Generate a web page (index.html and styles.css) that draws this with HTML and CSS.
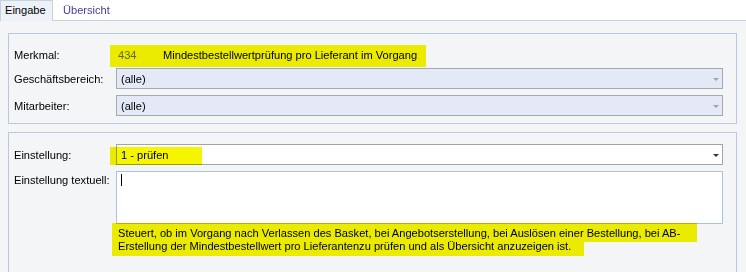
FILE: index.html
```html
<!DOCTYPE html>
<html lang="de">
<head>
<meta charset="utf-8">
<title>Eingabe</title>
<link rel="stylesheet" href="styles.css">
</head>
<body>
<div class="tabs">
  <div class="tab active">Eingabe</div>
  <div class="tab">Übersicht</div>
  <div class="tab-fill"></div>
</div>
<div class="panel">
  <div class="group g1">
    <div class="row merk">
      <span class="label">Merkmal:</span>
      <span class="value"><span class="num">434</span><span class="name">Mindestbestellwertprüfung pro Lieferant im Vorgang</span></span>
    </div>
    <div class="row">
      <span class="label">Geschäftsbereich:</span>
      <div class="combo disabled"><span class="ctext">(alle)</span><span class="arrow"></span></div>
    </div>
    <div class="row">
      <span class="label">Mitarbeiter:</span>
      <div class="combo disabled"><span class="ctext">(alle)</span><span class="arrow"></span></div>
    </div>
    <div class="hl hl-merk"></div>
  </div>
  <div class="group g2">
    <div class="row">
      <span class="label">Einstellung:</span>
      <div class="combo"><span class="ctext">1 - prüfen</span><span class="arrow"></span></div>
    </div>
    <div class="row top">
      <span class="label tlabel">Einstellung textuell:</span>
      <div class="field">
        <div class="textarea"><span class="caret"></span></div>
        <div class="desc">Steuert, ob im Vorgang nach Verlassen des Basket, bei Angebotserstellung, bei Auslösen einer Bestellung, bei AB-<br>Erstellung der Mindestbestellwert pro Lieferantenzu prüfen und als Übersicht anzuzeigen ist.</div>
      </div>
    </div>
    <div class="hl hl-set"></div>
    <div class="hl hl-desc1"></div>
    <div class="hl hl-desc2"></div>
  </div>
</div>
</body>
</html>
```

FILE: styles.css
```css
html, body {
  margin: 0;
  padding: 0;
}
body {
  width: 746px;
  height: 272px;
  overflow: hidden;
  background: #f4f5f7;
  font-family: "Liberation Sans", Arial, sans-serif;
  font-size: 11.1px;
  color: #000;
}
.tabs {
  display: flex;
  height: 20px;
  background: #ffffff;
  border-bottom: 1px solid #c3d3e4;
}
.tab {
  box-sizing: border-box;
  height: 20px;
  line-height: 20px;
  padding: 0 0 0 10px;
  color: #4a3a9a;
}
.tab.active {
  width: 53px;
  height: 21px;
  padding-left: 4px;
  background: #edf2f9;
  border: 1px solid #c3d3e4;
  border-bottom: none;
  color: #000;
  line-height: 19px;
  position: relative;
  z-index: 1;
}
.panel {
  padding: 12px 9px 0 8px;
}
.group {
  position: relative;
  border: 1px solid #b6c9dd;
}
.g1 {
  padding: 10px 13px 7px 5px;
}
.g2 {
  margin-top: 8px;
  padding: 11px 13px 20px 5px;
}
.row {
  display: flex;
  align-items: center;
}
.row + .row {
  margin-top: 6px;
}
.row.merk {
  height: 22px;
}
.row.merk + .row {
  margin-top: 2px;
}
.row.top {
  align-items: flex-start;
}
.label {
  flex: 0 0 102px;
}
.tlabel {
  padding-top: 3px;
  line-height: 13px;
}
.value {
  display: flex;
  padding-left: 2px;
}
.num {
  width: 45px;
  color: #6a6a6a;
}
.combo {
  flex: 1;
  box-sizing: border-box;
  height: 21px;
  display: flex;
  align-items: center;
  justify-content: space-between;
  padding: 0 3px 0 4px;
  background: #ffffff;
  border: 1px solid #a2a4a8;
}
.combo.disabled {
  background: #e3e9f6;
  border-color: #a6a9ae;
}
.arrow {
  width: 0;
  height: 0;
  border-left: 3px solid transparent;
  border-right: 3px solid transparent;
  border-top: 3px solid #333;
  margin-top: 1px;
}
.combo.disabled .arrow {
  border-top-color: #a0a4aa;
}
.field {
  flex: 1;
}
.textarea {
  box-sizing: border-box;
  height: 53px;
  background: #ffffff;
  border: 1px solid #a8c3e3;
  padding: 2px 0 0 4px;
}
.caret {
  display: block;
  width: 1px;
  height: 12px;
  background: #000;
}
.desc {
  margin-top: 3px;
  padding-left: 2px;
  line-height: 13px;
}
.hl {
  position: absolute;
  background: #f5f500;
  mix-blend-mode: multiply;
  pointer-events: none;
}
.hl-merk {
  left: 101px;
  top: 11px;
  width: 316px;
  height: 22px;
}
.hl-set {
  left: 101px;
  top: 14px;
  width: 92px;
  height: 18px;
}
.hl-desc1 {
  left: 103px;
  top: 90px;
  width: 585px;
  height: 19px;
}
.hl-desc2 {
  left: 103px;
  top: 109px;
  width: 472px;
  height: 14px;
}
```
